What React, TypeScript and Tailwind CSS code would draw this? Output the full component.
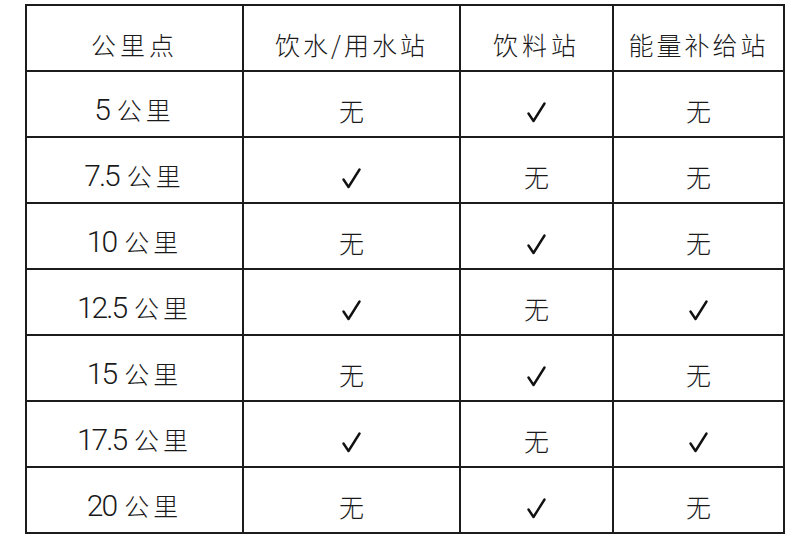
import React from "react";

const rows: [string, string, boolean, boolean, boolean][] = [
  ["5", "公里", false, true, false],
  ["7.5", "公里", true, false, false],
  ["10", "公里", false, true, false],
  ["12.5", "公里", true, false, true],
  ["15", "公里", false, true, false],
  ["17.5", "公里", true, false, true],
  ["20", "公里", false, true, false],
];

const Check = () => (
  <svg width="19" height="21" viewBox="0 0 19 21" className="inline-block">
    <path
      d="M1.5 11.5 L6.5 19 L17.5 1.5"
      fill="none"
      stroke="#111"
      strokeWidth="2.4"
      strokeLinecap="round"
      strokeLinejoin="round"
    />
  </svg>
);

const Mark = ({ ok }: { ok: boolean }) =>
  ok ? <Check /> : <span className="tracking-normal">无</span>;

const cell = "border-2 border-[#1c1c1c] text-center align-middle pt-3";

const App = () => {
  return (
    <div
      className="w-[800px] h-[539px] bg-white pt-[4px] pl-[25px] text-[#1a1a1a]"
      style={{ fontFamily: '"Noto Sans CJK SC", sans-serif' }}
    >
      <table className="border-collapse table-fixed w-[758px] text-[25px] leading-none font-light">
        <colgroup>
          <col className="w-[217px]" />
          <col className="w-[217px]" />
          <col className="w-[153px]" />
          <col className="w-[171px]" />
        </colgroup>
        <thead>
          <tr className="h-[66px]">
            <th className={`${cell} font-light tracking-[4px]`}>公里点</th>
            <th className={`${cell} font-light tracking-[3px]`}>饮水/用水站</th>
            <th className={`${cell} font-light tracking-[4px]`}>饮料站</th>
            <th className={`${cell} font-light tracking-[3px]`}>能量补给站</th>
          </tr>
        </thead>
        <tbody>
          {rows.map(([num, unit, a, b, c]) => (
            <tr key={num} className="h-[66px]">
              <td className={cell}>
                <span
                  className="text-[30px] font-light tracking-[-2px]"
                  style={{ fontFamily: "Roboto, sans-serif" }}
                >
                  {num}
                </span>
                <span className="ml-[8px] tracking-[4px]">{unit}</span>
              </td>
              <td className={cell}>
                <Mark ok={a} />
              </td>
              <td className={cell}>
                <Mark ok={b} />
              </td>
              <td className={cell}>
                <Mark ok={c} />
              </td>
            </tr>
          ))}
        </tbody>
      </table>
    </div>
  );
};

export default App;
